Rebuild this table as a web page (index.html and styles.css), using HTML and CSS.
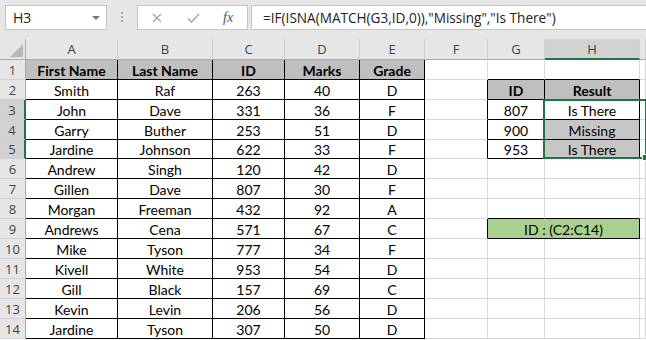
FILE: index.html
```html
<!DOCTYPE html>
<html lang="en">
  <head>
    <meta charset="UTF-8" />
    <meta name="viewport" content="width=device-width, initial-scale=1.0" />
    <link rel="stylesheet" href="styles.css">
  </head>
  <body>
    <div class="formula-bar">
      <div class="name-box">
        <span>H3</span>
        <span class="caret"></span>
      </div>
      <div class="grip"><i></i><i></i><i></i></div>
      <div class="fx-box">
        <svg class="icon-cancel" width="10" height="10" viewBox="0 0 10 10">
          <path d="M1 1 L9 9 M9 1 L1 9" stroke="#a3a3a3" stroke-width="1.3" fill="none" />
        </svg>
        <svg class="icon-enter" width="13" height="10" viewBox="0 0 13 10">
          <path d="M1 5.5 L4.5 9 L12 1" stroke="#a3a3a3" stroke-width="1.4" fill="none" />
        </svg>
        <span class="fx">fx</span>
      </div>
      <div class="formula">=IF(ISNA(MATCH(G3,ID,0)),"Missing","Is There")</div>
    </div>

    <div class="sheet">
      <!-- column headers -->
      <div class="corner"><span class="tri"></span></div>
      <div class="ch">A</div>
      <div class="ch">B</div>
      <div class="ch">C</div>
      <div class="ch">D</div>
      <div class="ch">E</div>
      <div class="ch">F</div>
      <div class="ch">G</div>
      <div class="ch on">H</div>
      <div class="ch"></div>

      <!-- row 1 -->
      <div class="rh">1</div>
      <div class="c t hd">First Name</div>
      <div class="c t hd">Last Name</div>
      <div class="c t hd">ID</div>
      <div class="c t hd">Marks</div>
      <div class="c t hd">Grade</div>
      <div class="c"></div>
      <div class="c bb"></div>
      <div class="c bb"></div>
      <div class="c"></div>

      <!-- row 2 -->
      <div class="rh">2</div>
      <div class="c t">Smith</div>
      <div class="c t">Raf</div>
      <div class="c t">263</div>
      <div class="c t">40</div>
      <div class="c t">D</div>
      <div class="c br"></div>
      <div class="c t hd">ID</div>
      <div class="c t hd">Result</div>
      <div class="c"></div>

      <!-- row 3 -->
      <div class="rh on">3</div>
      <div class="c t">John</div>
      <div class="c t">Dave</div>
      <div class="c t">331</div>
      <div class="c t">36</div>
      <div class="c t">F</div>
      <div class="c br"></div>
      <div class="c t">807</div>
      <div class="c t">Is There</div>
      <div class="c"></div>

      <!-- row 4 -->
      <div class="rh on">4</div>
      <div class="c t">Garry</div>
      <div class="c t">Buther</div>
      <div class="c t">253</div>
      <div class="c t">51</div>
      <div class="c t">D</div>
      <div class="c br"></div>
      <div class="c t">900</div>
      <div class="c t sel">Missing</div>
      <div class="c"></div>

      <!-- row 5 -->
      <div class="rh on">5</div>
      <div class="c t">Jardine</div>
      <div class="c t">Johnson</div>
      <div class="c t">622</div>
      <div class="c t">33</div>
      <div class="c t">F</div>
      <div class="c br"></div>
      <div class="c t">953</div>
      <div class="c t sel">Is There</div>
      <div class="c"></div>

      <!-- row 6 -->
      <div class="rh">6</div>
      <div class="c t">Andrew</div>
      <div class="c t">Singh</div>
      <div class="c t">120</div>
      <div class="c t">42</div>
      <div class="c t">D</div>
      <div class="c"></div>
      <div class="c"></div>
      <div class="c"></div>
      <div class="c"></div>

      <!-- row 7 -->
      <div class="rh">7</div>
      <div class="c t">Gillen</div>
      <div class="c t">Dave</div>
      <div class="c t">807</div>
      <div class="c t">30</div>
      <div class="c t">F</div>
      <div class="c"></div>
      <div class="c"></div>
      <div class="c"></div>
      <div class="c"></div>

      <!-- row 8 -->
      <div class="rh">8</div>
      <div class="c t">Morgan</div>
      <div class="c t">Freeman</div>
      <div class="c t">432</div>
      <div class="c t">92</div>
      <div class="c t">A</div>
      <div class="c"></div>
      <div class="c bb"></div>
      <div class="c bb"></div>
      <div class="c"></div>

      <!-- row 9 -->
      <div class="rh">9</div>
      <div class="c t">Andrews</div>
      <div class="c t">Cena</div>
      <div class="c t">571</div>
      <div class="c t">67</div>
      <div class="c t">C</div>
      <div class="c br"></div>
      <div class="c t note">ID : (C2:C14)</div>
      <div class="c"></div>

      <!-- row 10 -->
      <div class="rh">10</div>
      <div class="c t">Mike</div>
      <div class="c t">Tyson</div>
      <div class="c t">777</div>
      <div class="c t">34</div>
      <div class="c t">F</div>
      <div class="c"></div>
      <div class="c"></div>
      <div class="c"></div>
      <div class="c"></div>

      <!-- row 11 -->
      <div class="rh">11</div>
      <div class="c t">Kivell</div>
      <div class="c t">White</div>
      <div class="c t">953</div>
      <div class="c t">54</div>
      <div class="c t">D</div>
      <div class="c"></div>
      <div class="c"></div>
      <div class="c"></div>
      <div class="c"></div>

      <!-- row 12 -->
      <div class="rh">12</div>
      <div class="c t">Gill</div>
      <div class="c t">Black</div>
      <div class="c t">157</div>
      <div class="c t">69</div>
      <div class="c t">C</div>
      <div class="c"></div>
      <div class="c"></div>
      <div class="c"></div>
      <div class="c"></div>

      <!-- row 13 -->
      <div class="rh">13</div>
      <div class="c t">Kevin</div>
      <div class="c t">Levin</div>
      <div class="c t">206</div>
      <div class="c t">56</div>
      <div class="c t">D</div>
      <div class="c"></div>
      <div class="c"></div>
      <div class="c"></div>
      <div class="c"></div>

      <!-- row 14 -->
      <div class="rh">14</div>
      <div class="c t">Jardine</div>
      <div class="c t">Tyson</div>
      <div class="c t">307</div>
      <div class="c t">50</div>
      <div class="c t">D</div>
      <div class="c"></div>
      <div class="c"></div>
      <div class="c"></div>
      <div class="c"></div>

      <!-- active range H3:H5, drawn over the cells -->
      <div class="selection"><span class="handle"></span></div>
    </div>
  </body>
</html>
```

FILE: styles.css
```css
body {
  margin: 0;
  font-family: "Lato", sans-serif;
  background-color: #fff;
  overflow: hidden;
}

/* formula bar */

.formula-bar {
  height: 39px;
  box-sizing: border-box;
  padding: 5px 0 0 5px;
  background-color: #e6e6e6;
  display: flex;
  align-items: flex-start;
}

.name-box,
.fx-box,
.formula {
  height: 25px;
  box-sizing: border-box;
  border: 1px solid #c6c6c6;
  background-color: #fff;
  display: flex;
  align-items: center;
}

.name-box {
  width: 102px;
  justify-content: space-between;
  padding: 0 6px 0 7px;
  font: 14px "Open Sans", sans-serif;
  color: #222;
}

.caret {
  border-left: 4px solid transparent;
  border-right: 4px solid transparent;
  border-top: 4px solid #777;
}

.grip {
  width: 2px;
  margin: 7px 14px 0 14px;
  display: flex;
  flex-direction: column;
  gap: 2px;
}

.grip i {
  width: 2px;
  height: 2px;
  background-color: #a8a8a8;
}

.fx-box {
  width: 111px;
  padding-left: 14px;
}

.icon-enter {
  margin-left: 25px;
}

.fx {
  margin-left: 23px;
  font: italic 14px "Liberation Serif", serif;
  color: #555;
}

.formula {
  flex: 1;
  margin-left: 3px;
  border-right: none;
  padding-left: 11px;
  font: 13.6px "Open Sans", sans-serif;
  color: #222;
  white-space: nowrap;
}

/* worksheet grid */

.sheet {
  position: relative;
  display: grid;
  grid-template-columns: 26px 92px 95px 72px 75px 65px 63px 57px 95px 1fr;
  grid-template-rows: 21px repeat(4, 20px) 19px repeat(9, 20px);
}

.c,
.ch,
.rh,
.corner {
  box-sizing: border-box;
  border-right: 1px solid #d9d9d9;
  border-bottom: 1px solid #d9d9d9;
  display: flex;
  align-items: center;
  justify-content: center;
  white-space: nowrap;
  overflow: hidden;
}

.c {
  font-size: 14px;
  color: #000;
  padding-top: 1px;
}

.ch,
.rh,
.corner {
  background-color: #e6e6e6;
  font: 13px "Open Sans", sans-serif;
  color: #444;
}

.ch {
  border-right-color: #d0d0d0;
  border-bottom-color: #ababab;
}

.rh {
  border-right-color: #ababab;
  border-bottom-color: #d0d0d0;
}

.corner {
  border-right-color: #ababab;
  border-bottom-color: #ababab;
  align-items: flex-end;
  justify-content: flex-end;
  padding: 0 2px 2px 0;
}

.tri {
  width: 0;
  height: 0;
  border-left: 13px solid transparent;
  border-bottom: 13px solid #b8b8b8;
}

.ch.on {
  background-color: #d2d2d2;
  border-bottom: 2px solid #217346;
  color: #2a4b38;
}

.rh.on {
  background-color: #d2d2d2;
  border-right: 2px solid #217346;
}

/* bordered data ranges */

.t {
  border-right-color: #000;
  border-bottom-color: #000;
}

.br {
  border-right-color: #000;
}

.bb {
  border-bottom-color: #000;
}

.hd {
  background-color: #bfbfbf;
  font-weight: bold;
}

.sel {
  background-color: #c6c6c6;
}

.note {
  grid-column: span 2;
  background-color: #a9d08e;
}

/* the selection frame sits in the H3:H5 grid area without taking a slot */
.selection {
  position: absolute;
  grid-column: 9;
  grid-row: 4 / 7;
  top: -1px;
  left: -2px;
  right: -1px;
  bottom: 0;
  border: 2px solid #217346;
  pointer-events: none;
}

.handle {
  position: absolute;
  right: -4px;
  bottom: -4px;
  width: 5px;
  height: 5px;
  background-color: #217346;
  border: 1px solid #fff;
}
```
